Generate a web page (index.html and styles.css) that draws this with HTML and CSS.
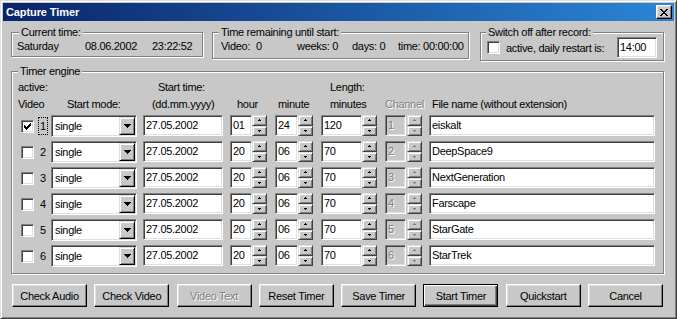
FILE: index.html
```html
<!DOCTYPE html>
<html>
<head>
<meta charset="utf-8">
<title>Capture Timer</title>
<link rel="stylesheet" href="styles.css">
</head>
<body>
<div class="window">
  <div class="titlebar">
    <span class="title">Capture Timer</span>
    <span class="closebtn"><svg width="8" height="7" viewBox="0 0 8 7"><path d="M0 0h2v1H0zM6 0h2v1H6zM1 1h2v1H1zM5 1h2v1H5zM2 2h4v1H2zM3 3h2v1H3zM2 4h4v1H2zM1 5h2v1H1zM5 5h2v1H5zM0 6h2v1H0zM6 6h2v1H6z" fill="#000"/></svg></span>
  </div>
  <div class="client">
    <div class="toprow">
      <div class="group g-current">
        <span class="legend">Current time:</span>
        <div class="ct-row">
          <span class="ct-day">Saturday</span><span class="ct-date">08.06.2002</span><span>23:22:52</span>
        </div>
      </div>
      <div class="group g-remain">
        <span class="legend">Time remaining until start:</span>
        <div class="tr-row">
          <span class="tr-video">Video:</span><span class="tr-vnum">0</span><span class="tr-weeks">weeks: 0</span><span class="tr-days">days: 0</span><span>time: 00:00:00</span>
        </div>
      </div>
      <div class="group g-switch">
        <span class="legend">Switch off after record:</span>
        <div class="sw-row">
          <span class="checkbox"></span>
          <span class="sw-text">active, daily restart is:</span>
          <span class="field sw-input">14:00</span>
        </div>
      </div>
    </div>

    <div class="group engine">
      <span class="legend">Timer engine</span>
      <div class="hdr">
        <span class="h-active">active:</span><span class="h-start">Start time:</span><span>Length:</span>
      </div>
      <div class="hdr">
        <span class="h-video">Video</span><span class="h-mode">Start mode:</span><span class="h-date">(dd.mm.yyyy)</span><span class="h-hour">hour</span><span class="h-min">minute</span><span class="h-len">minutes</span><span class="h-chan disabled">Channel</span><span>File name (without extension)</span>
      </div>
      <div class="rows">
        <div class="row">
          <span class="checkbox"><svg width="7" height="7" viewBox="0 0 7 7"><path d="M6 0h1v1H6zM5 1h2v1H5zM0 2h1v1H0zM4 2h3v1H4zM0 3h2v1H0zM3 3h3v1H3zM0 4h5v1H0zM1 5h3v1H1zM2 6h1v1H2z" fill="#000"/></svg></span>
          <span class="num focus">1</span>
          <span class="combo"><span class="combo-text">single</span><span class="combo-btn"><svg width="7" height="4" viewBox="0 0 7 4"><path d="M0 0h7v1H0zM1 1h5v1H1zM2 2h3v1H2zM3 3h1v1H3z" fill="#000"/></svg></span></span>
          <span class="field f-date">27.05.2002</span>
          <span class="field f-hour">01</span><span class="spin"><span class="spin-half"><svg width="3" height="2" viewBox="0 0 3 2"><path d="M1 0h1v1H1zM0 1h3v1H0z"/></svg></span><span class="spin-half"><svg width="3" height="2" viewBox="0 0 3 2"><path d="M0 0h3v1H0zM1 1h1v1H1z"/></svg></span></span>
          <span class="field f-min">24</span><span class="spin"><span class="spin-half"><svg width="3" height="2" viewBox="0 0 3 2"><path d="M1 0h1v1H1zM0 1h3v1H0z"/></svg></span><span class="spin-half"><svg width="3" height="2" viewBox="0 0 3 2"><path d="M0 0h3v1H0zM1 1h1v1H1z"/></svg></span></span>
          <span class="field f-len">120</span><span class="spin"><span class="spin-half"><svg width="3" height="2" viewBox="0 0 3 2"><path d="M1 0h1v1H1zM0 1h3v1H0z"/></svg></span><span class="spin-half"><svg width="3" height="2" viewBox="0 0 3 2"><path d="M0 0h3v1H0zM1 1h1v1H1z"/></svg></span></span>
          <span class="field f-chan off">1</span><span class="spin spin-off"><span class="spin-half"><svg width="3" height="2" viewBox="0 0 3 2"><path d="M1 0h1v1H1zM0 1h3v1H0z"/></svg></span><span class="spin-half"><svg width="3" height="2" viewBox="0 0 3 2"><path d="M0 0h3v1H0zM1 1h1v1H1z"/></svg></span></span>
          <span class="field f-file">eiskalt</span>
        </div>
        <div class="row">
          <span class="checkbox"></span>
          <span class="num">2</span>
          <span class="combo"><span class="combo-text">single</span><span class="combo-btn"><svg width="7" height="4" viewBox="0 0 7 4"><path d="M0 0h7v1H0zM1 1h5v1H1zM2 2h3v1H2zM3 3h1v1H3z" fill="#000"/></svg></span></span>
          <span class="field f-date">27.05.2002</span>
          <span class="field f-hour">20</span><span class="spin"><span class="spin-half"><svg width="3" height="2" viewBox="0 0 3 2"><path d="M1 0h1v1H1zM0 1h3v1H0z"/></svg></span><span class="spin-half"><svg width="3" height="2" viewBox="0 0 3 2"><path d="M0 0h3v1H0zM1 1h1v1H1z"/></svg></span></span>
          <span class="field f-min">06</span><span class="spin"><span class="spin-half"><svg width="3" height="2" viewBox="0 0 3 2"><path d="M1 0h1v1H1zM0 1h3v1H0z"/></svg></span><span class="spin-half"><svg width="3" height="2" viewBox="0 0 3 2"><path d="M0 0h3v1H0zM1 1h1v1H1z"/></svg></span></span>
          <span class="field f-len">70</span><span class="spin"><span class="spin-half"><svg width="3" height="2" viewBox="0 0 3 2"><path d="M1 0h1v1H1zM0 1h3v1H0z"/></svg></span><span class="spin-half"><svg width="3" height="2" viewBox="0 0 3 2"><path d="M0 0h3v1H0zM1 1h1v1H1z"/></svg></span></span>
          <span class="field f-chan off">2</span><span class="spin spin-off"><span class="spin-half"><svg width="3" height="2" viewBox="0 0 3 2"><path d="M1 0h1v1H1zM0 1h3v1H0z"/></svg></span><span class="spin-half"><svg width="3" height="2" viewBox="0 0 3 2"><path d="M0 0h3v1H0zM1 1h1v1H1z"/></svg></span></span>
          <span class="field f-file">DeepSpace9</span>
        </div>
        <div class="row">
          <span class="checkbox"></span>
          <span class="num">3</span>
          <span class="combo"><span class="combo-text">single</span><span class="combo-btn"><svg width="7" height="4" viewBox="0 0 7 4"><path d="M0 0h7v1H0zM1 1h5v1H1zM2 2h3v1H2zM3 3h1v1H3z" fill="#000"/></svg></span></span>
          <span class="field f-date">27.05.2002</span>
          <span class="field f-hour">20</span><span class="spin"><span class="spin-half"><svg width="3" height="2" viewBox="0 0 3 2"><path d="M1 0h1v1H1zM0 1h3v1H0z"/></svg></span><span class="spin-half"><svg width="3" height="2" viewBox="0 0 3 2"><path d="M0 0h3v1H0zM1 1h1v1H1z"/></svg></span></span>
          <span class="field f-min">06</span><span class="spin"><span class="spin-half"><svg width="3" height="2" viewBox="0 0 3 2"><path d="M1 0h1v1H1zM0 1h3v1H0z"/></svg></span><span class="spin-half"><svg width="3" height="2" viewBox="0 0 3 2"><path d="M0 0h3v1H0zM1 1h1v1H1z"/></svg></span></span>
          <span class="field f-len">70</span><span class="spin"><span class="spin-half"><svg width="3" height="2" viewBox="0 0 3 2"><path d="M1 0h1v1H1zM0 1h3v1H0z"/></svg></span><span class="spin-half"><svg width="3" height="2" viewBox="0 0 3 2"><path d="M0 0h3v1H0zM1 1h1v1H1z"/></svg></span></span>
          <span class="field f-chan off">3</span><span class="spin spin-off"><span class="spin-half"><svg width="3" height="2" viewBox="0 0 3 2"><path d="M1 0h1v1H1zM0 1h3v1H0z"/></svg></span><span class="spin-half"><svg width="3" height="2" viewBox="0 0 3 2"><path d="M0 0h3v1H0zM1 1h1v1H1z"/></svg></span></span>
          <span class="field f-file">NextGeneration</span>
        </div>
        <div class="row">
          <span class="checkbox"></span>
          <span class="num">4</span>
          <span class="combo"><span class="combo-text">single</span><span class="combo-btn"><svg width="7" height="4" viewBox="0 0 7 4"><path d="M0 0h7v1H0zM1 1h5v1H1zM2 2h3v1H2zM3 3h1v1H3z" fill="#000"/></svg></span></span>
          <span class="field f-date">27.05.2002</span>
          <span class="field f-hour">20</span><span class="spin"><span class="spin-half"><svg width="3" height="2" viewBox="0 0 3 2"><path d="M1 0h1v1H1zM0 1h3v1H0z"/></svg></span><span class="spin-half"><svg width="3" height="2" viewBox="0 0 3 2"><path d="M0 0h3v1H0zM1 1h1v1H1z"/></svg></span></span>
          <span class="field f-min">06</span><span class="spin"><span class="spin-half"><svg width="3" height="2" viewBox="0 0 3 2"><path d="M1 0h1v1H1zM0 1h3v1H0z"/></svg></span><span class="spin-half"><svg width="3" height="2" viewBox="0 0 3 2"><path d="M0 0h3v1H0zM1 1h1v1H1z"/></svg></span></span>
          <span class="field f-len">70</span><span class="spin"><span class="spin-half"><svg width="3" height="2" viewBox="0 0 3 2"><path d="M1 0h1v1H1zM0 1h3v1H0z"/></svg></span><span class="spin-half"><svg width="3" height="2" viewBox="0 0 3 2"><path d="M0 0h3v1H0zM1 1h1v1H1z"/></svg></span></span>
          <span class="field f-chan off">4</span><span class="spin spin-off"><span class="spin-half"><svg width="3" height="2" viewBox="0 0 3 2"><path d="M1 0h1v1H1zM0 1h3v1H0z"/></svg></span><span class="spin-half"><svg width="3" height="2" viewBox="0 0 3 2"><path d="M0 0h3v1H0zM1 1h1v1H1z"/></svg></span></span>
          <span class="field f-file">Farscape</span>
        </div>
        <div class="row">
          <span class="checkbox"></span>
          <span class="num">5</span>
          <span class="combo"><span class="combo-text">single</span><span class="combo-btn"><svg width="7" height="4" viewBox="0 0 7 4"><path d="M0 0h7v1H0zM1 1h5v1H1zM2 2h3v1H2zM3 3h1v1H3z" fill="#000"/></svg></span></span>
          <span class="field f-date">27.05.2002</span>
          <span class="field f-hour">20</span><span class="spin"><span class="spin-half"><svg width="3" height="2" viewBox="0 0 3 2"><path d="M1 0h1v1H1zM0 1h3v1H0z"/></svg></span><span class="spin-half"><svg width="3" height="2" viewBox="0 0 3 2"><path d="M0 0h3v1H0zM1 1h1v1H1z"/></svg></span></span>
          <span class="field f-min">06</span><span class="spin"><span class="spin-half"><svg width="3" height="2" viewBox="0 0 3 2"><path d="M1 0h1v1H1zM0 1h3v1H0z"/></svg></span><span class="spin-half"><svg width="3" height="2" viewBox="0 0 3 2"><path d="M0 0h3v1H0zM1 1h1v1H1z"/></svg></span></span>
          <span class="field f-len">70</span><span class="spin"><span class="spin-half"><svg width="3" height="2" viewBox="0 0 3 2"><path d="M1 0h1v1H1zM0 1h3v1H0z"/></svg></span><span class="spin-half"><svg width="3" height="2" viewBox="0 0 3 2"><path d="M0 0h3v1H0zM1 1h1v1H1z"/></svg></span></span>
          <span class="field f-chan off">5</span><span class="spin spin-off"><span class="spin-half"><svg width="3" height="2" viewBox="0 0 3 2"><path d="M1 0h1v1H1zM0 1h3v1H0z"/></svg></span><span class="spin-half"><svg width="3" height="2" viewBox="0 0 3 2"><path d="M0 0h3v1H0zM1 1h1v1H1z"/></svg></span></span>
          <span class="field f-file">StarGate</span>
        </div>
        <div class="row">
          <span class="checkbox"></span>
          <span class="num">6</span>
          <span class="combo"><span class="combo-text">single</span><span class="combo-btn"><svg width="7" height="4" viewBox="0 0 7 4"><path d="M0 0h7v1H0zM1 1h5v1H1zM2 2h3v1H2zM3 3h1v1H3z" fill="#000"/></svg></span></span>
          <span class="field f-date">27.05.2002</span>
          <span class="field f-hour">20</span><span class="spin"><span class="spin-half"><svg width="3" height="2" viewBox="0 0 3 2"><path d="M1 0h1v1H1zM0 1h3v1H0z"/></svg></span><span class="spin-half"><svg width="3" height="2" viewBox="0 0 3 2"><path d="M0 0h3v1H0zM1 1h1v1H1z"/></svg></span></span>
          <span class="field f-min">06</span><span class="spin"><span class="spin-half"><svg width="3" height="2" viewBox="0 0 3 2"><path d="M1 0h1v1H1zM0 1h3v1H0z"/></svg></span><span class="spin-half"><svg width="3" height="2" viewBox="0 0 3 2"><path d="M0 0h3v1H0zM1 1h1v1H1z"/></svg></span></span>
          <span class="field f-len">70</span><span class="spin"><span class="spin-half"><svg width="3" height="2" viewBox="0 0 3 2"><path d="M1 0h1v1H1zM0 1h3v1H0z"/></svg></span><span class="spin-half"><svg width="3" height="2" viewBox="0 0 3 2"><path d="M0 0h3v1H0zM1 1h1v1H1z"/></svg></span></span>
          <span class="field f-chan off">6</span><span class="spin spin-off"><span class="spin-half"><svg width="3" height="2" viewBox="0 0 3 2"><path d="M1 0h1v1H1zM0 1h3v1H0z"/></svg></span><span class="spin-half"><svg width="3" height="2" viewBox="0 0 3 2"><path d="M0 0h3v1H0zM1 1h1v1H1z"/></svg></span></span>
          <span class="field f-file">StarTrek</span>
        </div>
      </div>
    </div>

    <div class="buttons">
      <span class="btn">Check Audio</span>
      <span class="btn">Check Video</span>
      <span class="btn disabled">Video Text</span>
      <span class="btn">Reset Timer</span>
      <span class="btn">Save Timer</span>
      <span class="btn default">Start Timer</span>
      <span class="btn">Quickstart</span>
      <span class="btn">Cancel</span>
    </div>
  </div>
</div>
</body>
</html>
```

FILE: styles.css
```css
html, body {
  margin: 0;
  padding: 0;
}
body {
  background: #c8c8c8;
  font-family: "Liberation Sans", Arial, sans-serif;
  font-size: 11px;
  letter-spacing: -0.3px;
  color: #000;
}
.window {
  width: 677px;
  height: 319px;
  box-sizing: border-box;
  background: #c8c8c8;
  border: 1px solid;
  border-color: #dfdfdf #404040 #404040 #dfdfdf;
  box-shadow: inset 1px 1px #fff, inset -1px -1px #808080;
  padding: 2px;
}
.titlebar {
  height: 18px;
  display: flex;
  align-items: center;
  justify-content: space-between;
  padding-left: 3px;
  background: linear-gradient(to right, #0a246a, #2a86d6);
}
.title {
  color: #fff;
  font-weight: bold;
  font-size: 11px;
  letter-spacing: -0.1px;
}
.closebtn {
  width: 16px;
  height: 14px;
  box-sizing: border-box;
  margin-right: 2px;
  display: flex;
  align-items: center;
  justify-content: center;
  background: #c8c8c8;
  border: 1px solid;
  border-color: #fff #000 #000 #fff;
  box-shadow: inset -1px -1px #808080, inset 1px 1px #dfdfdf;
}
.closebtn svg { display: block; }
.client {
  padding: 11px 0 0 8px;
}
.toprow {
  display: flex;
  align-items: flex-start;
}
.group {
  position: relative;
  box-sizing: border-box;
  border: 1px solid #808080;
  box-shadow: 1px 1px 0 #fff, inset 1px 1px 0 #fff;
}
.legend {
  position: absolute;
  top: -8px;
  left: 7px;
  padding: 0 2px;
  line-height: 14px;
  background: #c8c8c8;
  white-space: nowrap;
}
.g-current {
  width: 192px;
  height: 25px;
}
.g-remain {
  width: 257px;
  height: 27px;
  margin-left: 9px;
}
.g-remain .legend { left: 6px; }
.g-switch {
  width: 184px;
  height: 29px;
  margin-left: 11px;
}
.g-switch .legend { left: 5px; }
.ct-row, .tr-row {
  display: flex;
  line-height: 13px;
  padding-top: 7px;
  white-space: nowrap;
}
.ct-row { padding-left: 5px; }
.ct-day { width: 68px; }
.ct-date { width: 67px; }
.tr-row { padding-left: 8px; }
.tr-video { width: 35px; }
.tr-vnum { width: 41px; }
.tr-weeks { width: 55px; }
.tr-days { width: 46px; }
.sw-row {
  display: flex;
  align-items: center;
  padding: 5px 6px 0 6px;
  height: 19px;
}
.sw-text {
  margin-left: 6px;
  white-space: nowrap;
}
.sw-input {
  margin-left: auto;
  width: 40px;
  height: 19px;
  line-height: 15px;
  padding-left: 2px;
}
.checkbox {
  width: 13px;
  height: 13px;
  box-sizing: border-box;
  flex: none;
  background: #fff;
  border: 1px solid;
  border-color: #808080 #fff #fff #808080;
  box-shadow: inset 1px 1px #404040, inset -1px -1px #dfdfdf;
  display: flex;
  align-items: center;
  justify-content: center;
}
.checkbox svg { display: block; }
.field {
  display: block;
  box-sizing: border-box;
  flex: none;
  height: 21px;
  background: #fff;
  border: 1px solid;
  border-color: #808080 #fff #fff #808080;
  box-shadow: inset 1px 1px #404040, inset -1px -1px #dfdfdf;
  padding: 0 0 0 2px;
  line-height: 19px;
  white-space: nowrap;
  overflow: hidden;
}
.field.off {
  background: #c8c8c8;
  color: #808080;
  text-shadow: 1px 1px 0 #fff;
}
.engine {
  margin-top: 10px;
  width: 653px;
  padding: 7px 0 6px 6px;
}
.engine .legend { left: 6px; }
.hdr {
  display: flex;
  height: 17px;
  line-height: 17px;
  white-space: nowrap;
}
.h-active { width: 140px; }
.h-start { width: 172px; }
.h-video { width: 49px; }
.h-mode { width: 85px; }
.h-date { width: 85px; }
.h-hour { width: 41px; }
.h-min { width: 52px; }
.h-len { width: 55px; }
.h-chan { width: 47px; }
.disabled {
  color: #808080;
  text-shadow: 1px 1px 0 #fff;
}
.rows {
  margin-top: 2px;
  display: flex;
  flex-direction: column;
  gap: 4px;
}
.row {
  display: flex;
  align-items: flex-start;
  height: 22px;
  padding-left: 3px;
}
.row > .checkbox {
  margin-top: 5px;
}
.num {
  flex: none;
  width: 10px;
  height: 18px;
  box-sizing: border-box;
  margin: 2px 0 0 4px;
  border: 1px dotted transparent;
  text-align: center;
  line-height: 16px;
  letter-spacing: 0;
}
.num.focus { border-color: #000; }
.combo {
  flex: none;
  display: flex;
  align-items: center;
  width: 86px;
  height: 22px;
  box-sizing: border-box;
  margin-left: 3px;
  background: #fff;
  border: 1px solid;
  border-color: #808080 #fff #fff #808080;
  box-shadow: inset 1px 1px #404040, inset -1px -1px #dfdfdf;
  padding: 1px 1px 1px 3px;
}
.combo-text { flex: 1; }
.combo-btn {
  width: 16px;
  height: 18px;
  box-sizing: border-box;
  display: flex;
  align-items: center;
  justify-content: center;
  background: #c8c8c8;
  border: 1px solid;
  border-color: #dfdfdf #000 #000 #dfdfdf;
  box-shadow: inset 1px 1px #fff, inset -1px -1px #808080;
}
.combo-btn svg { display: block; }
.f-date { width: 80px; margin-left: 6px; }
.f-hour { width: 22px; margin-left: 7px; }
.f-min { width: 23px; margin-left: 8px; }
.f-len { width: 41px; margin-left: 8px; }
.f-chan { width: 21px; margin-left: 8px; }
.f-file { width: 226px; margin-left: 7px; }
.spin {
  flex: none;
  width: 15px;
  height: 21px;
  display: flex;
  flex-direction: column;
}
.spin-off { margin-left: 1px; }
.spin-half {
  flex: 1;
  box-sizing: border-box;
  display: flex;
  align-items: center;
  justify-content: center;
  background: #c8c8c8;
  border: 1px solid;
  border-color: #dfdfdf #404040 #404040 #dfdfdf;
  box-shadow: inset 1px 1px #fff, inset -1px -1px #808080;
}
.spin-half svg { display: block; fill: #000; }
.spin-off .spin-half svg { fill: #808080; }
.buttons {
  margin-top: 10px;
  width: 651px;
  padding-left: 1px;
  display: flex;
  justify-content: space-between;
}
.btn {
  width: 75px;
  height: 23px;
  box-sizing: border-box;
  display: flex;
  align-items: center;
  justify-content: center;
  white-space: nowrap;
  background: #c8c8c8;
  border: 1px solid;
  border-color: #fff #000 #000 #fff;
  box-shadow: inset -1px -1px #808080, inset 1px 1px #dfdfdf;
}
.btn.default {
  border-color: #000;
  box-shadow: inset 1px 1px #fff, inset -1px -1px #404040, inset -2px -2px #808080;
}
```
